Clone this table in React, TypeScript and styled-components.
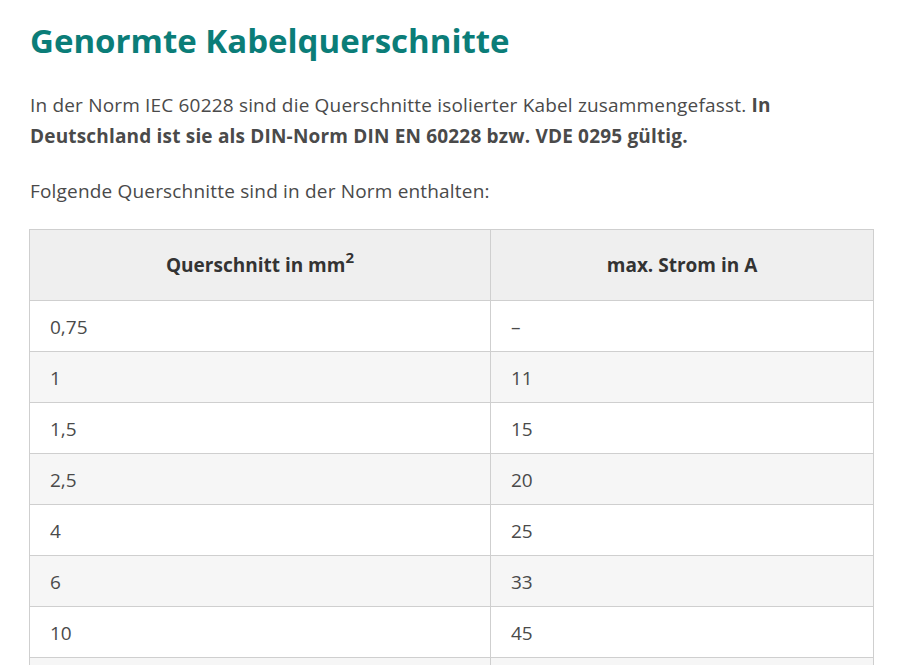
import styled, { createGlobalStyle } from "styled-components";

const ROWS: [string, string][] = [
  ["0,75", "–"],
  ["1", "11"],
  ["1,5", "15"],
  ["2,5", "20"],
  ["4", "25"],
  ["6", "33"],
  ["10", "45"],
  ["16", "61"],
];

const GlobalStyle = createGlobalStyle`
  body {
    margin: 0;
    background: #fff;
    font-family: "Open Sans", "Liberation Sans", sans-serif;
    color: #4a4a4a;
  }
`;

export default function App() {
  return (
    <>
      <GlobalStyle />
      <Page>
        <Title>Genormte Kabelquerschnitte</Title>
        <Paragraph>
          In der Norm IEC 60228 sind die Querschnitte isolierter Kabel
          zusammengefasst.{" "}
          <strong>
            In Deutschland ist sie als DIN-Norm DIN EN 60228 bzw. VDE 0295
            gültig.
          </strong>
        </Paragraph>
        <Paragraph>Folgende Querschnitte sind in der Norm enthalten:</Paragraph>
        <Table>
          <thead>
            <tr>
              <HeadCell>
                Querschnitt in mm<sup>2</sup>
              </HeadCell>
              <HeadCell>max. Strom in A</HeadCell>
            </tr>
          </thead>
          <tbody>
            {ROWS.map(([a, b], i) => (
              <Row key={i} $odd={i % 2 === 1}>
                <Cell>{a}</Cell>
                <Cell>{b}</Cell>
              </Row>
            ))}
          </tbody>
        </Table>
      </Page>
    </>
  );
}

/* -------------------------------------------------------------------------- */
/*                                   STYLES                                   */
/* -------------------------------------------------------------------------- */

const Page = styled.div`
  padding: 0 28px 0 29px;
  height: 665px;
  overflow: hidden;
`;

const Title = styled.h2`
  margin: 18px 0 0 1px;
  font-size: 33px;
  line-height: 46px;
  font-weight: 700;
  color: #0b7d78;
`;

const Paragraph = styled.p`
  margin: 26px 0 0 1px;
  font-size: 19px;
  line-height: 31px;
  letter-spacing: 0.18px;

  strong {
    font-weight: 700;
  }

  & + & {
    margin-top: 24px;
  }
`;

const Table = styled.table`
  margin-top: 22px;
  width: 845px;
  border-collapse: collapse;
  table-layout: fixed;
  font-size: 19px;

  th,
  td {
    box-sizing: border-box;
  }

  th:first-child,
  td:first-child {
    width: 461px;
  }
`;

const HeadCell = styled.th`
  height: 71px;
  padding: 0 20px;
  background: #efefef;
  border: 1px solid #cfcfcf;
  color: #333;
  font-weight: 700;
  text-align: center;

  sup {
    font-size: 15px;
    line-height: 0;
    vertical-align: 0.6em;
  }
`;

const Row = styled.tr<{ $odd: boolean }>`
  background: ${(p) => (p.$odd ? "#f6f6f6" : "#fff")};
`;

const Cell = styled.td`
  height: 51px;
  padding: 2px 20px 0;
  border: 1px solid #cfcfcf;
  vertical-align: middle;
`;
